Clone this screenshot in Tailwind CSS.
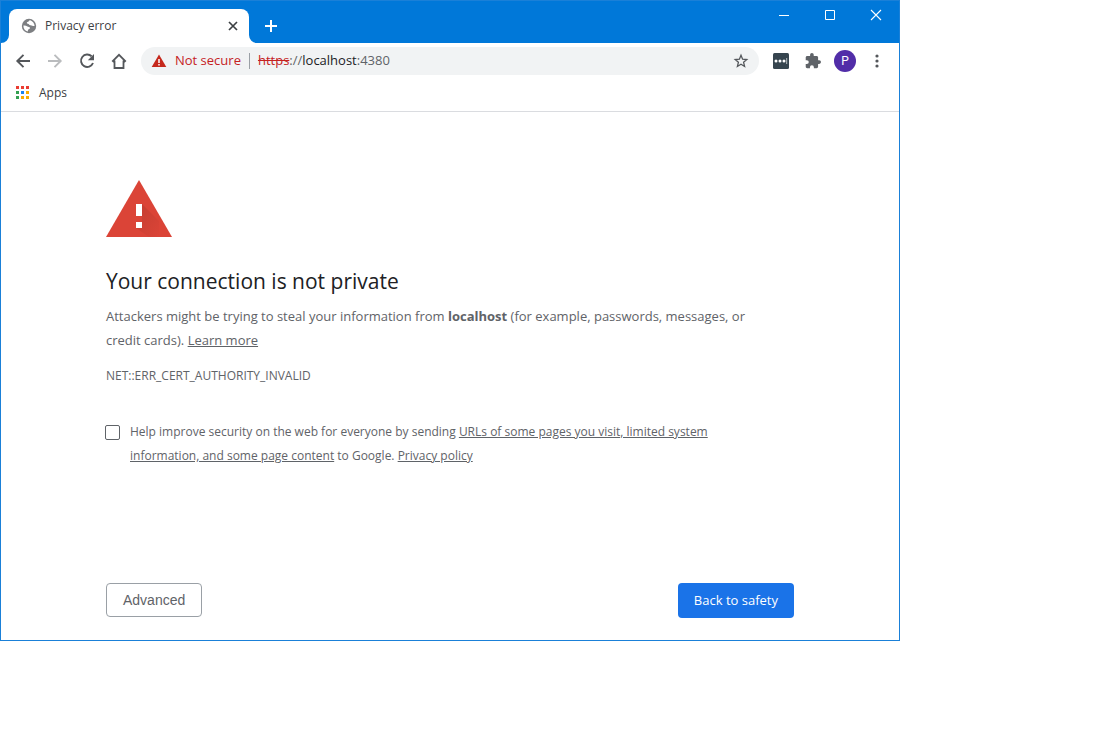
<!DOCTYPE html>
<html lang="en">
<head>
<meta charset="utf-8">
<meta name="viewport" content="width=device-width, initial-scale=1">
<title>Privacy error</title>
<script src="https://cdn.jsdelivr.net/npm/@tailwindcss/browser@4"></script>
</head>
<body class="bg-white font-['Open_Sans','Noto_Sans',sans-serif] text-[#5f6368]">
<div class="w-full max-w-[900px] border border-[#1a80d8] bg-white">
  <header class="flex h-[42px] items-end bg-[#0078d9]">
    <div class="flex h-[34px] items-end">
      <svg class="size-2" viewBox="0 0 8 8" aria-hidden="true"><path d="M8 0v8H0a8 8 0 0 0 8-8z" fill="#fff"/></svg>
      <div class="flex h-full w-60 items-center rounded-t-lg bg-white pr-2 pl-3">
        <svg class="size-4" viewBox="0 0 16 16" aria-hidden="true">
          <circle cx="8" cy="8" r="7.2" fill="#7d7f82"/>
          <path d="M9.200 2.300C7.500 2.500 8 3.900 6.400 4c-1 .3-.7 1.700.5 1.700 1.400 0 1 1.700 2.500 1.600 1.700-.1 1.900.9 4.200.8-.1-2.600-1.800-5-4.400-5.800zM2.400 7.600c1.500-.2 2.900 0 4 1 .7.600 2.600.3 2.600 1.400 0 1.300-1.900.9-2 2.100 0 .6-.3 1.100-.2 1.500-2.700-.6-4.600-3-4.400-6z" fill="#fff"/>
        </svg>
        <span class="flex-1 pl-2 text-xs text-[#3c4043]">Privacy error</span>
        <button class="flex size-4 items-center justify-center" aria-label="Close tab">
          <svg class="size-4" viewBox="0 0 16 16"><path d="M4 4l8 8M12 4l-8 8" stroke="#3c4043" stroke-width="1.7"/></svg>
        </button>
      </div>
      <svg class="size-2" viewBox="0 0 8 8" aria-hidden="true"><path d="M0 0v8h8a8 8 0 0 1-8-8z" fill="#fff"/></svg>
    </div>
    <button class="mb-[9px] ml-1.5 flex size-4 items-center justify-center" aria-label="New tab">
      <svg class="size-4" viewBox="0 0 16 16"><path d="M8 2v12M2 8h12" stroke="#fff" stroke-width="2"/></svg>
    </button>
    <div class="ml-auto flex h-full items-start">
      <button class="flex h-7 w-[46px] items-center justify-center" aria-label="Minimize"><svg class="size-3" viewBox="0 0 12 12"><path d="M1 6.500h10" stroke="#fff"/></svg></button>
      <button class="flex h-7 w-[46px] items-center justify-center" aria-label="Maximize"><svg class="size-3" viewBox="0 0 12 12"><path d="M1.500 1.500h9v9h-9z" fill="none" stroke="#fff"/></svg></button>
      <button class="flex h-7 w-[46px] items-center justify-center" aria-label="Close"><svg class="size-3" viewBox="0 0 12 12"><path d="M1 1l10 10M11 1L1 11" stroke="#fff" stroke-width="1.100"/></svg></button>
    </div>
  </header>

  <div class="flex h-9 items-center pr-3.5 pl-3">
    <nav class="flex gap-3" aria-label="Navigation">
      <button aria-label="Back"><svg class="size-5" viewBox="0 0 20 20" fill="none" stroke="#54575b" stroke-width="1.900"><path d="M17 10H4.500M10.500 3.800L4.300 10l6.200 6.200"/></svg></button>
      <button aria-label="Forward"><svg class="size-5" viewBox="0 0 20 20" fill="none" stroke="#babcbe" stroke-width="1.900"><path d="M3 10h12.500M9.500 3.800l6.200 6.200-6.200 6.200"/></svg></button>
      <button aria-label="Reload"><svg class="size-5" viewBox="0 0 20 20"><path d="M14.600 5.300A6.200 6.200 0 1 0 16 12" fill="none" stroke="#54575b" stroke-width="1.900"/><path d="M17 3v6.200h-6.200z" fill="#54575b"/></svg></button>
      <button aria-label="Home"><svg class="size-5" viewBox="0 0 20 20" fill="none" stroke="#54575b" stroke-width="1.800"><path d="M4 10.500h1.500V17h9v-6.500H16M3.200 10.600L10 3.800l6.800 6.800"/></svg></button>
    </nav>
    <div class="ml-3 flex h-7 flex-1 items-center rounded-full bg-[#f1f3f4] pr-2.5 pl-2.5 text-[13px]">
      <svg class="size-4" viewBox="0 0 16 16" aria-hidden="true"><path d="M8 1.500L15.300 14H.700z" fill="#c5281c"/><path d="M8 6v4M8 11v1.500" stroke="#fff" stroke-width="1.500"/></svg>
      <span class="pl-2 text-[#c5221f]">Not secure</span>
      <span class="mx-2 h-4 w-px bg-[#9aa0a6]"></span>
      <span><span class="text-[#c5221f] line-through">https</span>://<span class="text-[#202124]">localhost</span>:4380</span>
      <button class="ml-auto" aria-label="Bookmark this tab"><svg class="size-4" viewBox="0 0 16 16"><path d="M8 2.300l1.600 3.900 4.200.4-3.200 2.700 1 4.200L8 11.300l-3.600 2.200 1-4.200-3.200-2.700 4.200-.4z" fill="none" stroke="#54575b" stroke-width="1.300"/></svg></button>
    </div>
    <div class="ml-3.5 flex items-center">
      <button aria-label="Password manager extension"><svg class="size-4" viewBox="0 0 16 16"><rect width="16" height="16" rx="1.500" fill="#36454f"/><circle cx="3" cy="8" r="1.500" fill="#fff"/><circle cx="7" cy="8" r="1.500" fill="#fff"/><circle cx="11" cy="8" r="1.500" fill="#fff"/><path d="M13.700 5v6" stroke="#b8bec2"/></svg></button>
      <button class="ml-4" aria-label="Extensions"><svg class="size-4" viewBox="1 1 22 22"><path d="M20.500 11H19V7c0-1.100-.9-2-2-2h-4V3.500a2.500 2.500 0 0 0-5 0V5H4c-1.100 0-2 .9-2 2v3.800h1.500a2.700 2.700 0 0 1 0 5.400H2V20c0 1.100.9 2 2 2h3.800v-1.500a2.700 2.700 0 0 1 5.400 0V22H17c1.100 0 2-.9 2-2v-4h1.500a2.500 2.500 0 0 0 0-5z" fill="#5f6368"/></svg></button>
      <button class="ml-[13px] flex size-[22px] items-center justify-center rounded-full bg-[#512da8] font-[Roboto,sans-serif] text-xs text-white" aria-label="Profile P">P</button>
      <button class="ml-[13px]" aria-label="Menu"><svg class="size-4" viewBox="0 0 16 16" fill="#54575b"><circle cx="8" cy="3" r="1.600"/><circle cx="8" cy="8" r="1.600"/><circle cx="8" cy="13" r="1.600"/></svg></button>
    </div>
  </div>

  <div class="flex h-[33px] items-start border-b border-[#dadce0] px-3.5 pt-1">
    <button class="flex items-center gap-2 text-xs leading-5 text-[#3c4043]">
      <svg class="size-4" viewBox="0 0 16 16" aria-hidden="true">
        <path d="M1 1h3v3H1zM6 1h3v3H6zM11 1h3v3h-3z" fill="#ea3c32"/>
        <path d="M1 6h3v3H1zM1 11h3v3H1z" fill="#34a052"/><path d="M6 6h3v3H6z" fill="#1a83f0"/>
        <path d="M11 6h3v3h-3zM6 11h3v3H6zM11 11h3v3h-3z" fill="#f9ab00"/>
      </svg>Apps
    </button>
  </div>

  <main class="mx-auto max-w-[688px] pt-[60px] pb-[22px]">
    <svg class="h-[72px] w-[66px]" viewBox="0 0 66 72" role="img" aria-label="Warning">
      <defs><linearGradient id="shade" x1="0" y1="0" x2="1" y2="1"><stop offset="0" stop-color="#b93a2e"/><stop offset="1" stop-color="#db4437"/></linearGradient></defs>
      <path d="M33 8L66 65H0z" fill="#db4437"/>
      <path d="M36 32L53 49v16H43L30 56l6-4z" fill="url(#shade)" opacity=".7"/>
      <path d="M30 32h6v12h-6zM30 50h6v6h-6z" fill="#fff"/>
    </svg>
    <h1 class="mt-[21px] text-[21px] leading-8 text-[#202124]">Your connection is not private</h1>
    <p class="mt-[7px] max-w-[670px] text-[13px] leading-6">Attackers might be trying to steal your information from <strong>localhost</strong> (for example, passwords, messages, or credit cards). <a href="#" class="underline">Learn more</a></p>
    <p class="mt-3 text-xs leading-6">NET::ERR_CERT_AUTHORITY_INVALID</p>
    <div class="mt-8 flex items-start">
      <input id="report" type="checkbox" class="mt-[5px] -ml-px size-[15px] shrink-0 appearance-none rounded-xs border border-[#5f6368] bg-white checked:bg-[#1a73e8]">
      <label for="report" class="max-w-[630px] pl-2.5 text-xs leading-6">Help improve security on the web for everyone by sending <a href="#" class="underline">URLs of some pages you visit, limited system information, and some page content</a> to Google. <a href="#" class="underline">Privacy policy</a></label>
    </div>
    <div class="mt-[115px] flex items-start justify-between">
      <button class="h-[34px] rounded-sm border border-[#9aa0a6] px-4 font-['Liberation_Sans',sans-serif] text-sm">Advanced</button>
      <button class="h-[35px] rounded-sm bg-[#1a73e8] px-4 text-[13px] font-medium text-white">Back to safety</button>
    </div>
  </main>
</div>
</body>
</html>
